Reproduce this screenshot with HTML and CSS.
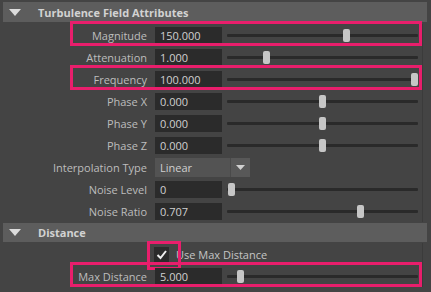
FILE: index.html
```html
<!DOCTYPE html>
<html lang="en">
<head>
    <meta charset="UTF-8">
    <title>Turbulence Field Attributes</title>
    <link rel="stylesheet" href="styles.css">
</head>
<body>

    <!-- Turbulence section -->
    <div class="section first">
        <div class="section-header">
            <svg class="arrow" width="12" height="7" viewBox="0 0 12 7"><polygon points="0,0 12,0 6,7" fill="#dcdcdc"/></svg>
            Turbulence Field Attributes
        </div>

        <div class="row marked">
            <span class="label">Magnitude</span>
            <div class="field">150.000</div>
            <div class="slider"><div class="rail"><div class="handle" style="left: 63%"></div></div></div>
        </div>
        <div class="row">
            <span class="label">Attenuation</span>
            <div class="field">1.000</div>
            <div class="slider"><div class="rail"><div class="handle" style="left: 19.6%"></div></div></div>
        </div>
        <div class="row marked">
            <span class="label">Frequency</span>
            <div class="field">100.000</div>
            <div class="slider"><div class="rail"><div class="handle" style="left: 100%"></div></div></div>
        </div>
        <div class="row">
            <span class="label">Phase X</span>
            <div class="field">0.000</div>
            <div class="slider"><div class="rail"><div class="handle" style="left: 50%"></div></div></div>
        </div>
        <div class="row">
            <span class="label">Phase Y</span>
            <div class="field">0.000</div>
            <div class="slider"><div class="rail"><div class="handle" style="left: 50%"></div></div></div>
        </div>
        <div class="row">
            <span class="label">Phase Z</span>
            <div class="field">0.000</div>
            <div class="slider"><div class="rail"><div class="handle" style="left: 50%"></div></div></div>
        </div>
        <div class="row">
            <span class="label">Interpolation Type</span>
            <div class="dropdown">
                <span class="dropdown-value">Linear</span>
                <span class="dropdown-button">
                    <svg width="9" height="5" viewBox="0 0 9 5"><polygon points="0,0 9,0 4.5,5" fill="#d0d0d0"/></svg>
                </span>
            </div>
        </div>
        <div class="row">
            <span class="label">Noise Level</span>
            <div class="field">0</div>
            <div class="slider"><div class="rail"><div class="handle" style="left: 0%"></div></div></div>
        </div>
        <div class="row">
            <span class="label">Noise Ratio</span>
            <div class="field">0.707</div>
            <div class="slider"><div class="rail"><div class="handle" style="left: 70.7%"></div></div></div>
        </div>
    </div>

    <!-- Distance section -->
    <div class="section">
        <div class="section-header">
            <svg class="arrow" width="12" height="7" viewBox="0 0 12 7"><polygon points="0,0 12,0 6,7" fill="#dcdcdc"/></svg>
            Distance
        </div>

        <div class="row">
            <span class="label"></span>
            <span class="checkbox marked-box">
                <svg width="15" height="15" viewBox="0 0 15 15"><polyline points="3.5,8 6.5,11 12,4" fill="none" stroke="#f0f0f0" stroke-width="2"/></svg>
            </span>
            <span class="check-label">Use Max Distance</span>
        </div>
        <div class="row marked">
            <span class="label">Max Distance</span>
            <div class="field">5.000</div>
            <div class="slider"><div class="rail"><div class="handle" style="left: 5%"></div></div></div>
        </div>
    </div>

</body>
</html>
```

FILE: styles.css
```css
/* General Reset */
* {
    margin: 0;
    padding: 0;
    box-sizing: border-box;
}

body {
    font-family: 'Open Sans', 'Liberation Sans', sans-serif;
    font-size: 11px;
    background-color: #444444;
    color: #bdbdbd;
    width: 431px;
    height: 292px;
    overflow: hidden;
    padding: 2px 4px 0 3px;
}

/* Section Headers */
.section-header {
    display: flex;
    align-items: center;
    height: 20px;
    background-color: #5d5d5d;
    color: #d2d2d2;
    font-weight: 700;
    padding-left: 6px;
}

.section-header .arrow {
    margin-right: 17px;
}

.section.first .section-header {
    margin-bottom: 2px;
}

.section + .section .section-header {
    height: 19px;
    margin-top: 1px;
    margin-bottom: 1px;
}

/* Attribute Rows */
.row {
    position: relative;
    display: flex;
    align-items: center;
    height: 22px;
    padding-right: 4px;
    border-right: 1px solid #3b3b3b;
    margin-right: 4px;
}

.label {
    width: 144px;
    margin-right: 8px;
    text-align: right;
    flex-shrink: 0;
}

.field {
    width: 67px;
    height: 17px;
    line-height: 17px;
    background-color: #2b2b2b;
    color: #d0d0d0;
    padding-left: 5px;
    flex-shrink: 0;
}

/* Sliders */
.slider {
    flex: 1;
    height: 3px;
    margin-left: 5px;
    background-color: #2a2a2a;
    border-radius: 1px;
    padding: 0 4px;
}

.rail {
    position: relative;
    height: 3px;
}

.handle {
    position: absolute;
    top: -5px;
    width: 7px;
    height: 13px;
    margin-left: -3.5px;
    background-color: #c6c6c6;
    border-radius: 2px;
}

/* Dropdown */
.dropdown {
    display: flex;
    height: 19px;
    background-color: #535353;
}

.dropdown-value {
    width: 76px;
    line-height: 19px;
    padding-left: 5px;
    color: #cfcfcf;
    border-right: 1px solid #4a4a4a;
}

.dropdown-button {
    display: flex;
    align-items: center;
    justify-content: center;
    width: 19px;
    background-color: #585858;
}

/* Checkbox */
.checkbox {
    position: relative;
    display: flex;
    width: 15px;
    height: 15px;
    margin-left: -1px;
    background-color: #2b2b2b;
}

.check-label {
    margin-left: 7px;
    color: #c4c4c4;
}

/* Pink highlight marks */
.row.marked::after {
    content: "";
    position: absolute;
    left: 67px;
    right: 0;
    top: -3px;
    bottom: 0;
    border: 3px solid #e91e6c;
}

.marked-box::after {
    content: "";
    position: absolute;
    left: -7px;
    top: -6px;
    width: 28px;
    height: 23px;
    border: 3px solid #e91e6c;
}
```
